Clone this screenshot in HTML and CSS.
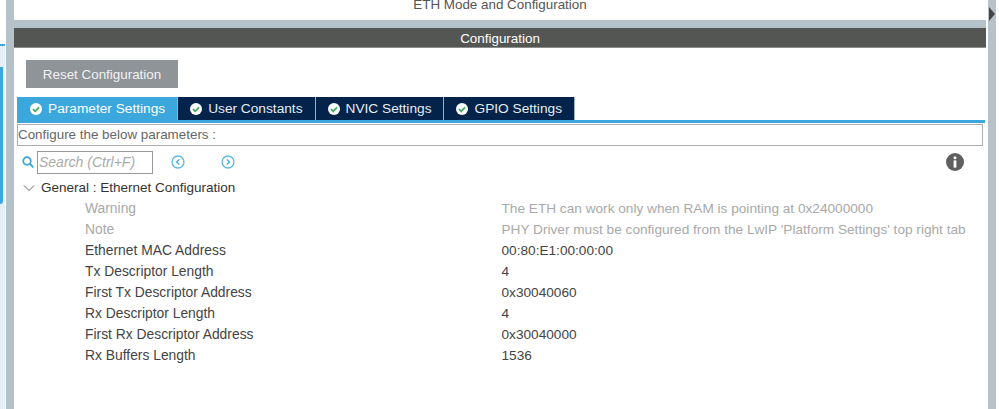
FILE: index.html
```html
<!DOCTYPE html>
<html lang="en">
<head>
    <meta charset="UTF-8">
    <title>ETH Mode and Configuration</title>
    <link rel="stylesheet" href="styles.css">
</head>
<body>
    <div class="app">
        <div class="left-strip">
            <div class="strip-line"></div>
            <div class="strip-pale">
                <div class="strip-box"></div>
            </div>
        </div>
        <div class="main">
            <div class="collapse-arrow"></div>
            <div class="mode-title"><span>ETH Mode and Configuration</span></div>
            <div class="band"></div>
            <div class="config-title">Configuration</div>
            <div class="panel">
                <button class="reset-btn">Reset Configuration</button>
                <div class="tabs">
                    <div class="tab active">
                        <svg class="tab-icon" viewBox="0 0 12 12"><circle cx="6" cy="6" r="6" fill="#fff"/><path d="M3 6.2l2.2 2.1L9 4.3" fill="none" stroke="#3fa85f" stroke-width="1.8"/></svg>
                        Parameter Settings
                    </div>
                    <div class="tab">
                        <svg class="tab-icon" viewBox="0 0 12 12"><circle cx="6" cy="6" r="6" fill="#fff"/><path d="M3 6.2l2.2 2.1L9 4.3" fill="none" stroke="#3fa85f" stroke-width="1.8"/></svg>
                        User Constants
                    </div>
                    <div class="tab">
                        <svg class="tab-icon" viewBox="0 0 12 12"><circle cx="6" cy="6" r="6" fill="#fff"/><path d="M3 6.2l2.2 2.1L9 4.3" fill="none" stroke="#3fa85f" stroke-width="1.8"/></svg>
                        NVIC Settings
                    </div>
                    <div class="tab">
                        <svg class="tab-icon" viewBox="0 0 12 12"><circle cx="6" cy="6" r="6" fill="#fff"/><path d="M3 6.2l2.2 2.1L9 4.3" fill="none" stroke="#3fa85f" stroke-width="1.8"/></svg>
                        GPIO Settings
                    </div>
                </div>
                <div class="hint">Configure the below parameters :</div>
                <div class="search-row">
                    <svg class="search-icon" viewBox="0 0 12 12"><circle cx="5" cy="5" r="3.8" fill="none" stroke="#3ba7dc" stroke-width="1.7"/><path d="M8 8l3.4 3.4" stroke="#3ba7dc" stroke-width="1.9"/></svg>
                    <div class="search-box">Search (Ctrl+F)</div>
                    <svg class="nav-icon nav-prev" viewBox="0 0 14 14"><circle cx="7" cy="7" r="6" fill="none" stroke="#5db8e6" stroke-width="1.3"/><path d="M8.2 4.4L5.6 7l2.6 2.6" fill="none" stroke="#3ba7dc" stroke-width="1.3"/></svg>
                    <svg class="nav-icon nav-next" viewBox="0 0 14 14"><circle cx="7" cy="7" r="6" fill="none" stroke="#5db8e6" stroke-width="1.3"/><path d="M5.8 4.4L8.4 7 5.8 9.6" fill="none" stroke="#3ba7dc" stroke-width="1.3"/></svg>
                    <svg class="info-icon" viewBox="0 0 18 18"><circle cx="9" cy="9" r="9" fill="#5f5f5f"/><circle cx="9" cy="4.8" r="1.5" fill="#fff"/><rect x="7.6" y="7.4" width="2.8" height="7.2" fill="#fff"/></svg>
                </div>
                <div class="group-head">
                    <svg class="chevron" viewBox="0 0 12 8"><path d="M1 1.5l5 5 5-5" fill="none" stroke="#666" stroke-width="1"/></svg>
                    General : Ethernet Configuration
                </div>
                <div class="params">
                    <div class="param muted"><span>Warning</span><span>The ETH can work only when RAM is pointing at 0x24000000</span></div>
                    <div class="param muted"><span>Note</span><span>PHY Driver must be configured from the LwIP 'Platform Settings' top right tab</span></div>
                    <div class="param"><span>Ethernet MAC Address</span><span>00:80:E1:00:00:00</span></div>
                    <div class="param"><span>Tx Descriptor Length</span><span>4</span></div>
                    <div class="param"><span>First Tx Descriptor Address</span><span>0x30040060</span></div>
                    <div class="param"><span>Rx Descriptor Length</span><span>4</span></div>
                    <div class="param"><span>First Rx Descriptor Address</span><span>0x30040000</span></div>
                    <div class="param"><span>Rx Buffers Length</span><span>1536</span></div>
                </div>
            </div>
        </div>
    </div>
</body>
</html>
```

FILE: styles.css
```css
body {
    margin: 0;
    font-family: "Liberation Sans", Arial, sans-serif;
    font-size: 13.7px;
    color: #444;
    background: #fff;
    overflow: hidden;
}
.app {
    display: flex;
    width: 999px;
    height: 409px;
}
.left-strip {
    width: 6px;
    flex: none;
    box-sizing: border-box;
    padding-top: 44px;
    display: flex;
    flex-direction: column;
}
.strip-line {
    width: 5px;
    height: 2px;
    background: #3ba7dc;
}
.strip-pale {
    flex: 1;
    width: 5px;
    padding-top: 21px;
    background: #e4f0f9;
}
.strip-box {
    width: 3px;
    height: 137px;
    background: #3ba7dc;
    border-radius: 0 0 3px 0;
}
.main {
    position: relative;
    width: 974px;
    height: 409px;
    flex: none;
    background: #fff;
    border-left: 8px solid #b6c2c9;
    border-right: 8px solid #b6c2c9;
    display: flex;
    flex-direction: column;
}
.collapse-arrow {
    position: absolute;
    top: 7px;
    right: -7px;
    border-left: 6px solid #444;
    border-top: 7px solid transparent;
    border-bottom: 7px solid transparent;
}
.mode-title {
    height: 20px;
    margin-right: 2px;
    text-align: center;
    overflow: hidden;
    line-height: 10px;
    font-size: 13.4px;
    color: #555;
}
.band {
    height: 8px;
    margin-right: 2px;
    background: #b6c2c9;
}
.config-title {
    height: 20px;
    margin-right: 2px;
    background: #545654;
    color: #fff;
    font-size: 13.4px;
    text-align: center;
    line-height: 21px;
    border-bottom: 1px solid #8c8f8e;
    box-sizing: border-box;
}
.panel {
    flex: 1;
    padding-top: 12px;
}
.reset-btn {
    display: block;
    margin-left: 12px;
    width: 152px;
    height: 28px;
    background: #8f9498;
    border: none;
    padding: 0;
    color: #f2f2f2;
    font: inherit;
    font-size: 13.4px;
}
.tabs {
    display: flex;
    margin: 9px 3px 0 3px;
    height: 23px;
    border-bottom: 3px solid #3ba7dc;
}
.tab {
    display: flex;
    align-items: center;
    gap: 6px;
    box-sizing: border-box;
    height: 23px;
    padding: 0 12px;
    background: #03234b;
    color: #e6edf3;
    border-right: 1px solid #9fb0bf;
}
.tab.active {
    padding-left: 13px;
    background: #3ba7dc;
    color: #fff;
}
.tab-icon {
    width: 12px;
    height: 12px;
    flex: none;
}
.hint {
    box-sizing: border-box;
    height: 22px;
    margin: 1px 5px 0 3px;
    border: 1px solid #adadad;
    line-height: 20px;
    font-size: 13.4px;
    color: #666;
}
.search-row {
    display: flex;
    align-items: center;
    height: 24px;
    margin-top: 4px;
    padding-left: 8px;
}
.search-icon {
    width: 12px;
    height: 12px;
    margin-right: 3px;
    flex: none;
}
.search-box {
    box-sizing: border-box;
    width: 116px;
    height: 23px;
    border: 1px solid #999;
    padding-left: 1px;
    line-height: 21px;
    font-size: 14px;
    font-style: italic;
    color: #aaa;
}
.nav-icon {
    width: 14px;
    height: 14px;
    flex: none;
}
.nav-prev {
    margin-left: 18px;
}
.nav-next {
    margin-left: 36px;
}
.info-icon {
    width: 18px;
    height: 18px;
    margin-left: auto;
    margin-right: 24px;
    flex: none;
}
.group-head {
    display: flex;
    align-items: center;
    height: 21px;
    margin-top: 3px;
    padding-left: 9px;
    font-size: 13.5px;
    color: #333;
}
.chevron {
    width: 12px;
    height: 8px;
    margin-right: 6px;
    flex: none;
}
.params {
    padding-left: 71px;
}
.param {
    display: grid;
    grid-template-columns: 416.5px 1fr;
    align-items: baseline;
    height: 21px;
    line-height: 21px;
    font-size: 13.65px;
    color: #444;
}
.param span:first-child {
    font-size: 13.85px;
}
.param.muted {
    color: #a9a9a9;
}
```
